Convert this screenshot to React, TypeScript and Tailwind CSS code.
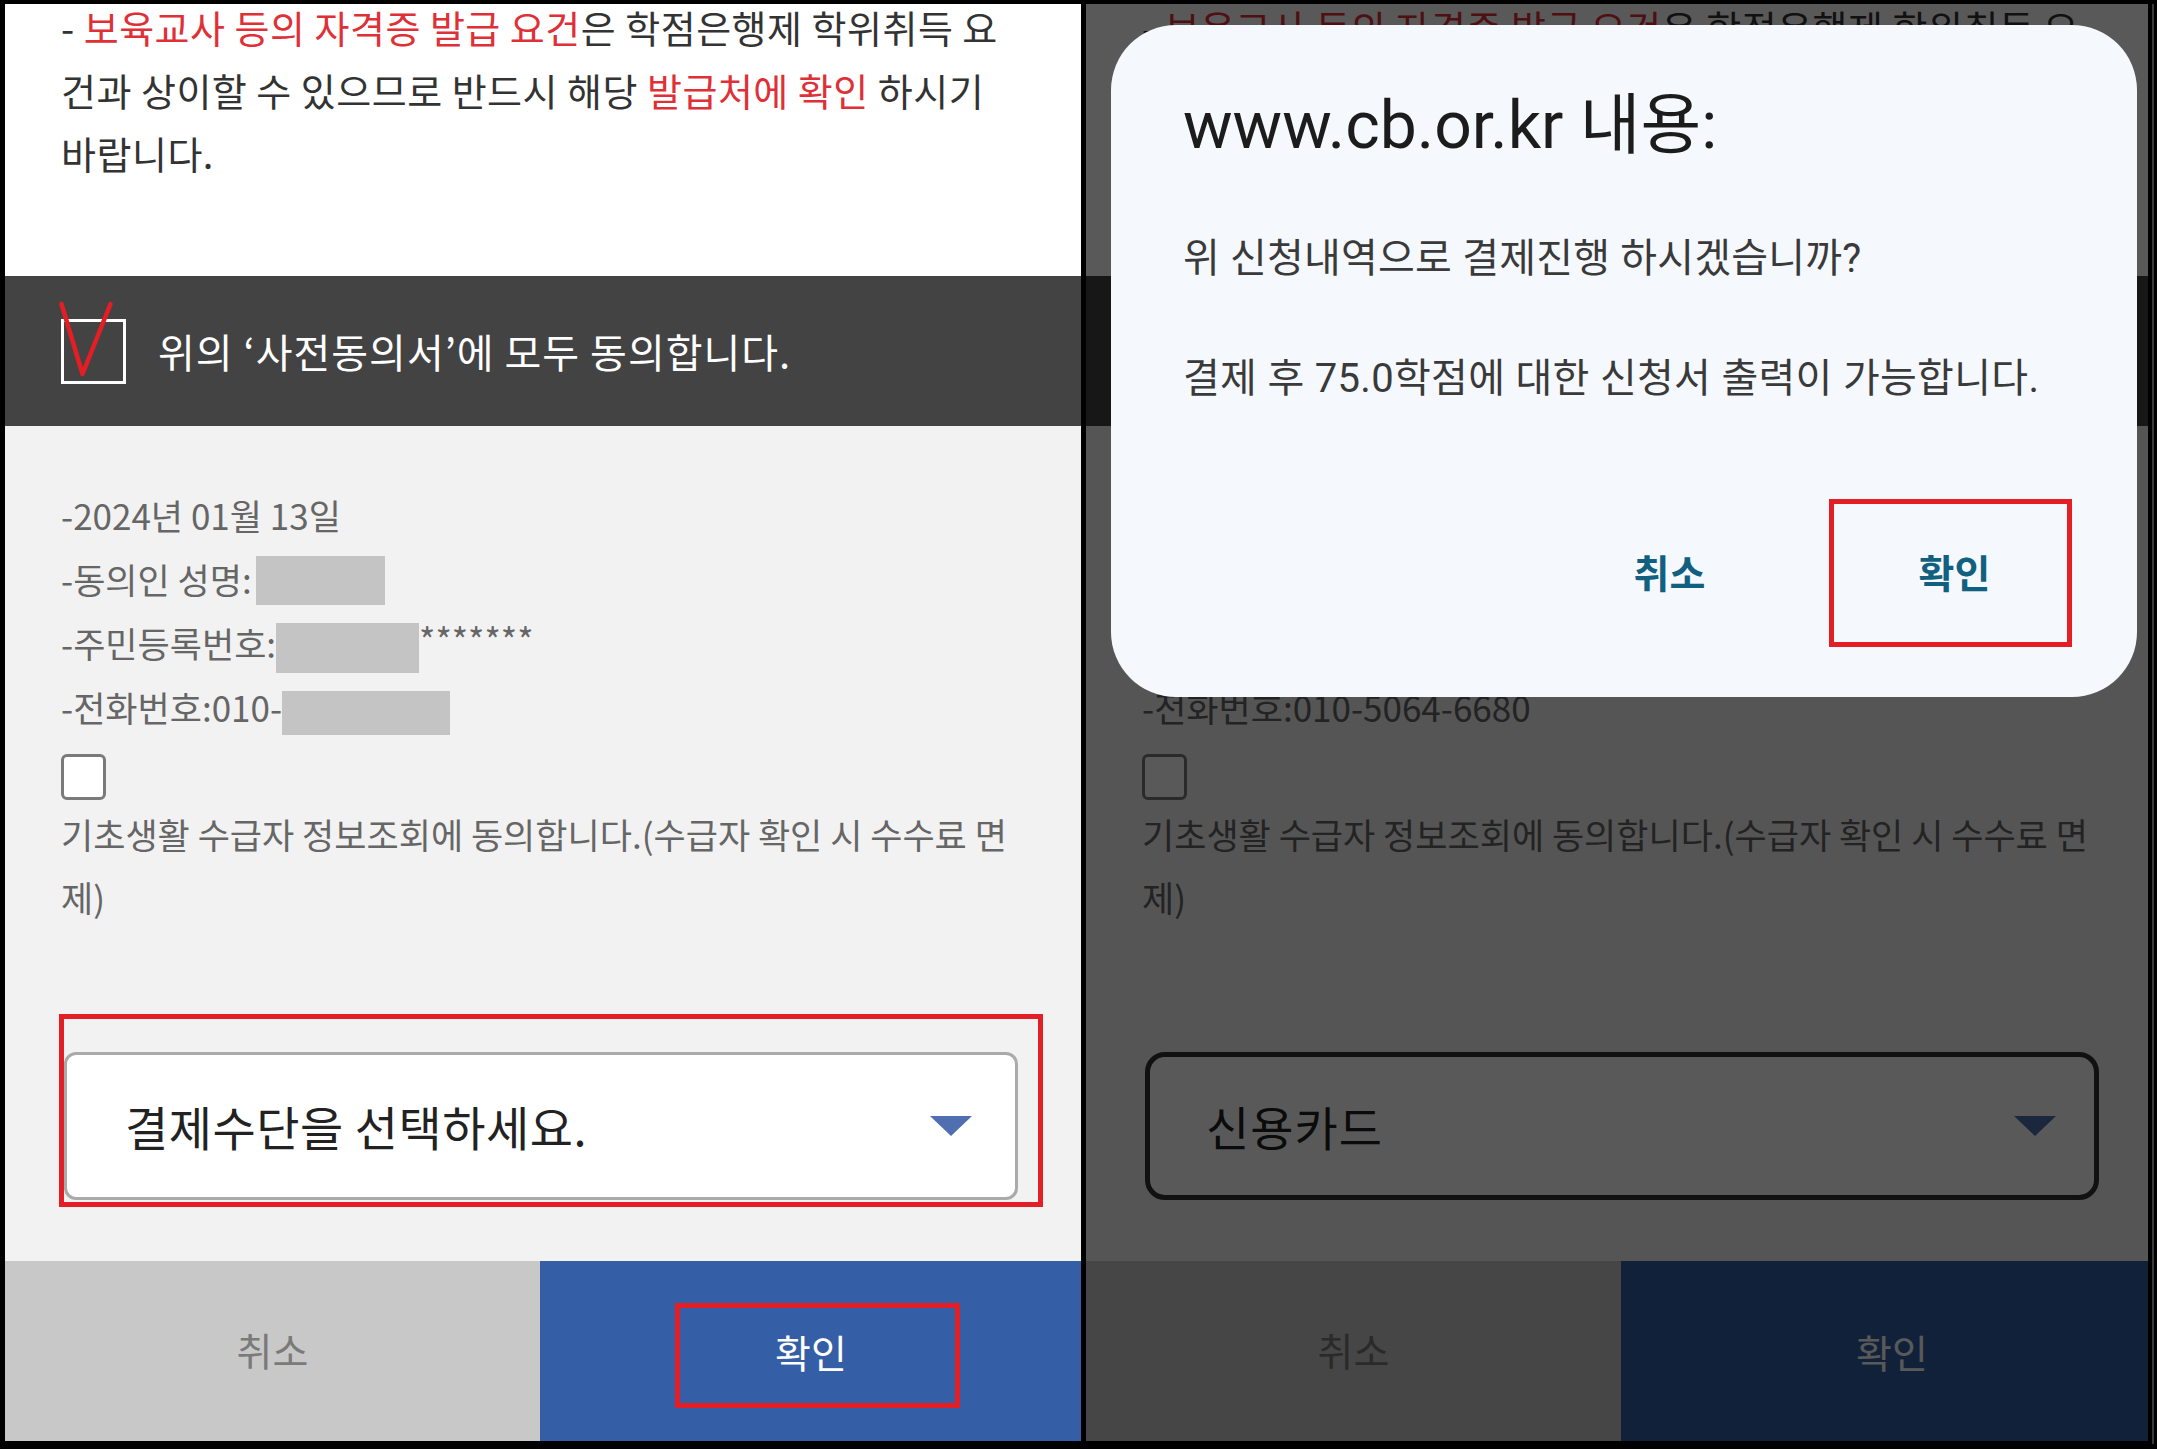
import React from "react";

const KR = "font-['Noto_Sans_CJK_KR',sans-serif]";
const DLG = "font-['Roboto','Noto_Sans_CJK_KR',sans-serif]";

function Page({ right }: { right: boolean }) {
  return (
    <div className={`w-[1076px] h-[1437px] flex flex-col ${KR}`}>
      {/* top white text section */}
      <div className="h-[272px] shrink-0 overflow-hidden bg-white">
        <div className="-mt-[9px] pl-[56px] text-[38px] leading-[63px] tracking-[0.5px] text-[#333333] whitespace-nowrap">
          <div>
            - <span className="text-[#df3038]">보육교사 등의 자격증 발급 요건</span>은 학점은행제 학위취득 요
          </div>
          <div>
            건과 상이할 수 있으므로 반드시 해당 <span className="text-[#df3038]">발급처에 확인</span> 하시기
          </div>
          <div>바랍니다.</div>
        </div>
      </div>

      {/* dark agreement band */}
      <div className="h-[150px] shrink-0 bg-[#434343] flex items-center pl-[56px]">
        <div className="relative w-[65px] h-[65px] border-[3px] border-white shrink-0">
          <svg className="absolute left-[-6px] top-[-21px] w-[58px] h-[80px] overflow-visible" viewBox="0 0 58 80">
            <polyline
              points="3.5,3 24.5,73 52.5,3"
              fill="none"
              stroke="#e31e24"
              strokeWidth="4.5"
              strokeLinecap="round"
              strokeLinejoin="round"
            />
          </svg>
        </div>
        <div className="ml-[32px] text-[40px] leading-[50px] tracking-[1px] text-white whitespace-nowrap">
          위의 ‘사전동의서’에 모두 동의합니다.
        </div>
      </div>

      {/* light gray info section */}
      <div className="h-[835px] shrink-0 bg-[#f2f2f2] pt-[57px]">
        <div className="pl-[56px] text-[35px] leading-[64px] text-[#666666] whitespace-nowrap">
          <div>-2024년 01월 13일</div>
          <div className="flex items-center">
            -동의인 성명:
            <span className="inline-block w-[129px] h-[49px] bg-[#c4c4c4] ml-[4px] mt-[3px]" />
          </div>
          <div className="flex items-center">
            -주민등록번호:
            <span className="inline-block w-[143px] h-[50px] bg-[#c4c4c4] mt-[9px]" />
            <span className="self-start -mt-[4px]">*******</span>
          </div>
          <div className="flex items-center">
            {right ? (
              <span>-전화번호:010-5064-6680</span>
            ) : (
              <>
                -전화번호:010-
                <span className="inline-block w-[168px] h-[44px] bg-[#c4c4c4] mt-[11px]" />
              </>
            )}
          </div>
        </div>
        <div className="ml-[56px] mt-[15px] w-[45px] h-[46px] rounded-[6px] border-[3px] border-[#7a7a7a] bg-white" />
        <div className="mt-[2px] pl-[56px] text-[35px] leading-[63px] text-[#666666] whitespace-nowrap">
          <div>기초생활 수급자 정보조회에 동의합니다.(수급자 확인 시 수수료 면</div>
          <div>제)</div>
        </div>

        {/* select with highlight */}
        <div
          className={`ml-[54px] mt-[86px] w-[984px] border-[5px] pt-[33px] pr-[20px] pb-[2px] ${
            right ? "border-transparent" : "border-[#e31e24]"
          }`}
        >
          {right ? (
            <div className="h-[148px] w-[954px] rounded-[20px] border-[5px] border-[#333333] bg-white flex items-center justify-between pl-[56px] pr-[38px]">
              <span className="text-[47px] leading-[56px] tracking-[1px] text-[#222222]">신용카드</span>
              <svg className="w-[42px] h-[20px]" viewBox="0 0 42 20">
                <polygon points="0,0 42,0 21,20" fill="#4f6fb0" />
              </svg>
            </div>
          ) : (
            <div className="h-[148px] w-[954px] rounded-[12px] border-[3px] border-[#aaaaaa] bg-white flex items-center justify-between pl-[58px] pr-[43px]">
              <span className="text-[47px] leading-[56px] tracking-[0.5px] text-[#222222]">결제수단을 선택하세요.</span>
              <svg className="w-[42px] h-[20px]" viewBox="0 0 42 20">
                <polygon points="0,0 42,0 21,20" fill="#4f6fb0" />
              </svg>
            </div>
          )}
        </div>
      </div>

      {/* bottom buttons */}
      <div className="h-[180px] shrink-0 flex">
        <div className="w-[535px] bg-[#c8c8c8] flex items-center justify-center text-[39px] text-[#7a7a7a]">
          <span className="-mt-[4px]">취소</span>
        </div>
        <div className="flex-1 bg-[#345ea6] flex items-center justify-center pl-[13px] pt-[9px]">
          <div
            className={`w-[285px] h-[105px] border-[5px] flex items-center justify-center text-[39px] text-white ${
              right ? "border-transparent" : "border-[#e31e24]"
            }`}
          >
            <span className="-ml-[12px] -mt-[8px]">확인</span>
          </div>
        </div>
      </div>
    </div>
  );
}

export default function App() {
  return (
    <div className="w-[2157px] h-[1449px] bg-black flex pt-[4px] pl-[5px] overflow-hidden">
      <div className="w-[1076px] h-[1437px] overflow-hidden shrink-0">
        <Page right={false} />
      </div>
      <div className="w-[5px] shrink-0" />
      <div className="relative w-[1062px] h-[1437px] overflow-hidden shrink-0">
        <Page right={true} />
        <div className="absolute inset-0 bg-black/65" />
        <div
          className={`absolute left-[25px] top-[21px] w-[1026px] h-[672px] rounded-[65px] bg-[#f5f8fd] pl-[72px] pt-[61px] pr-[65px] ${DLG}`}
        >
          <div className="text-[66px] leading-[80px] text-[#1c1c1c] whitespace-nowrap">www.cb.or.kr 내용:</div>
          <div className="mt-[68px] text-[40px] leading-[50px] tracking-[0.2px] text-[#3a3a3a] whitespace-nowrap">
            위 신청내역으로 결제진행 하시겠습니까?
          </div>
          <div className="mt-[70px] text-[40px] leading-[50px] tracking-[0.3px] text-[#3a3a3a] whitespace-nowrap">
            결제 후 75.0학점에 대한 신청서 출력이 가능합니다.
          </div>
          <div className="mt-[95px] flex justify-end gap-[38px]">
            <div className="w-[243px] h-[148px] flex items-center justify-center text-[39px] font-bold text-[#11607f]">
              <span className="mt-[4px]">취소</span>
            </div>
            <div className="w-[243px] h-[148px] border-[5px] border-[#e31e24] flex items-center justify-center text-[39px] font-bold text-[#11607f]">
              <span className="ml-[8px] mt-[4px]">확인</span>
            </div>
          </div>
        </div>
      </div>
      <div className="w-[4px] shrink-0" />
      <div className="w-[2px] h-[1440px] bg-[#3a3a3a] shrink-0" />
    </div>
  );
}
